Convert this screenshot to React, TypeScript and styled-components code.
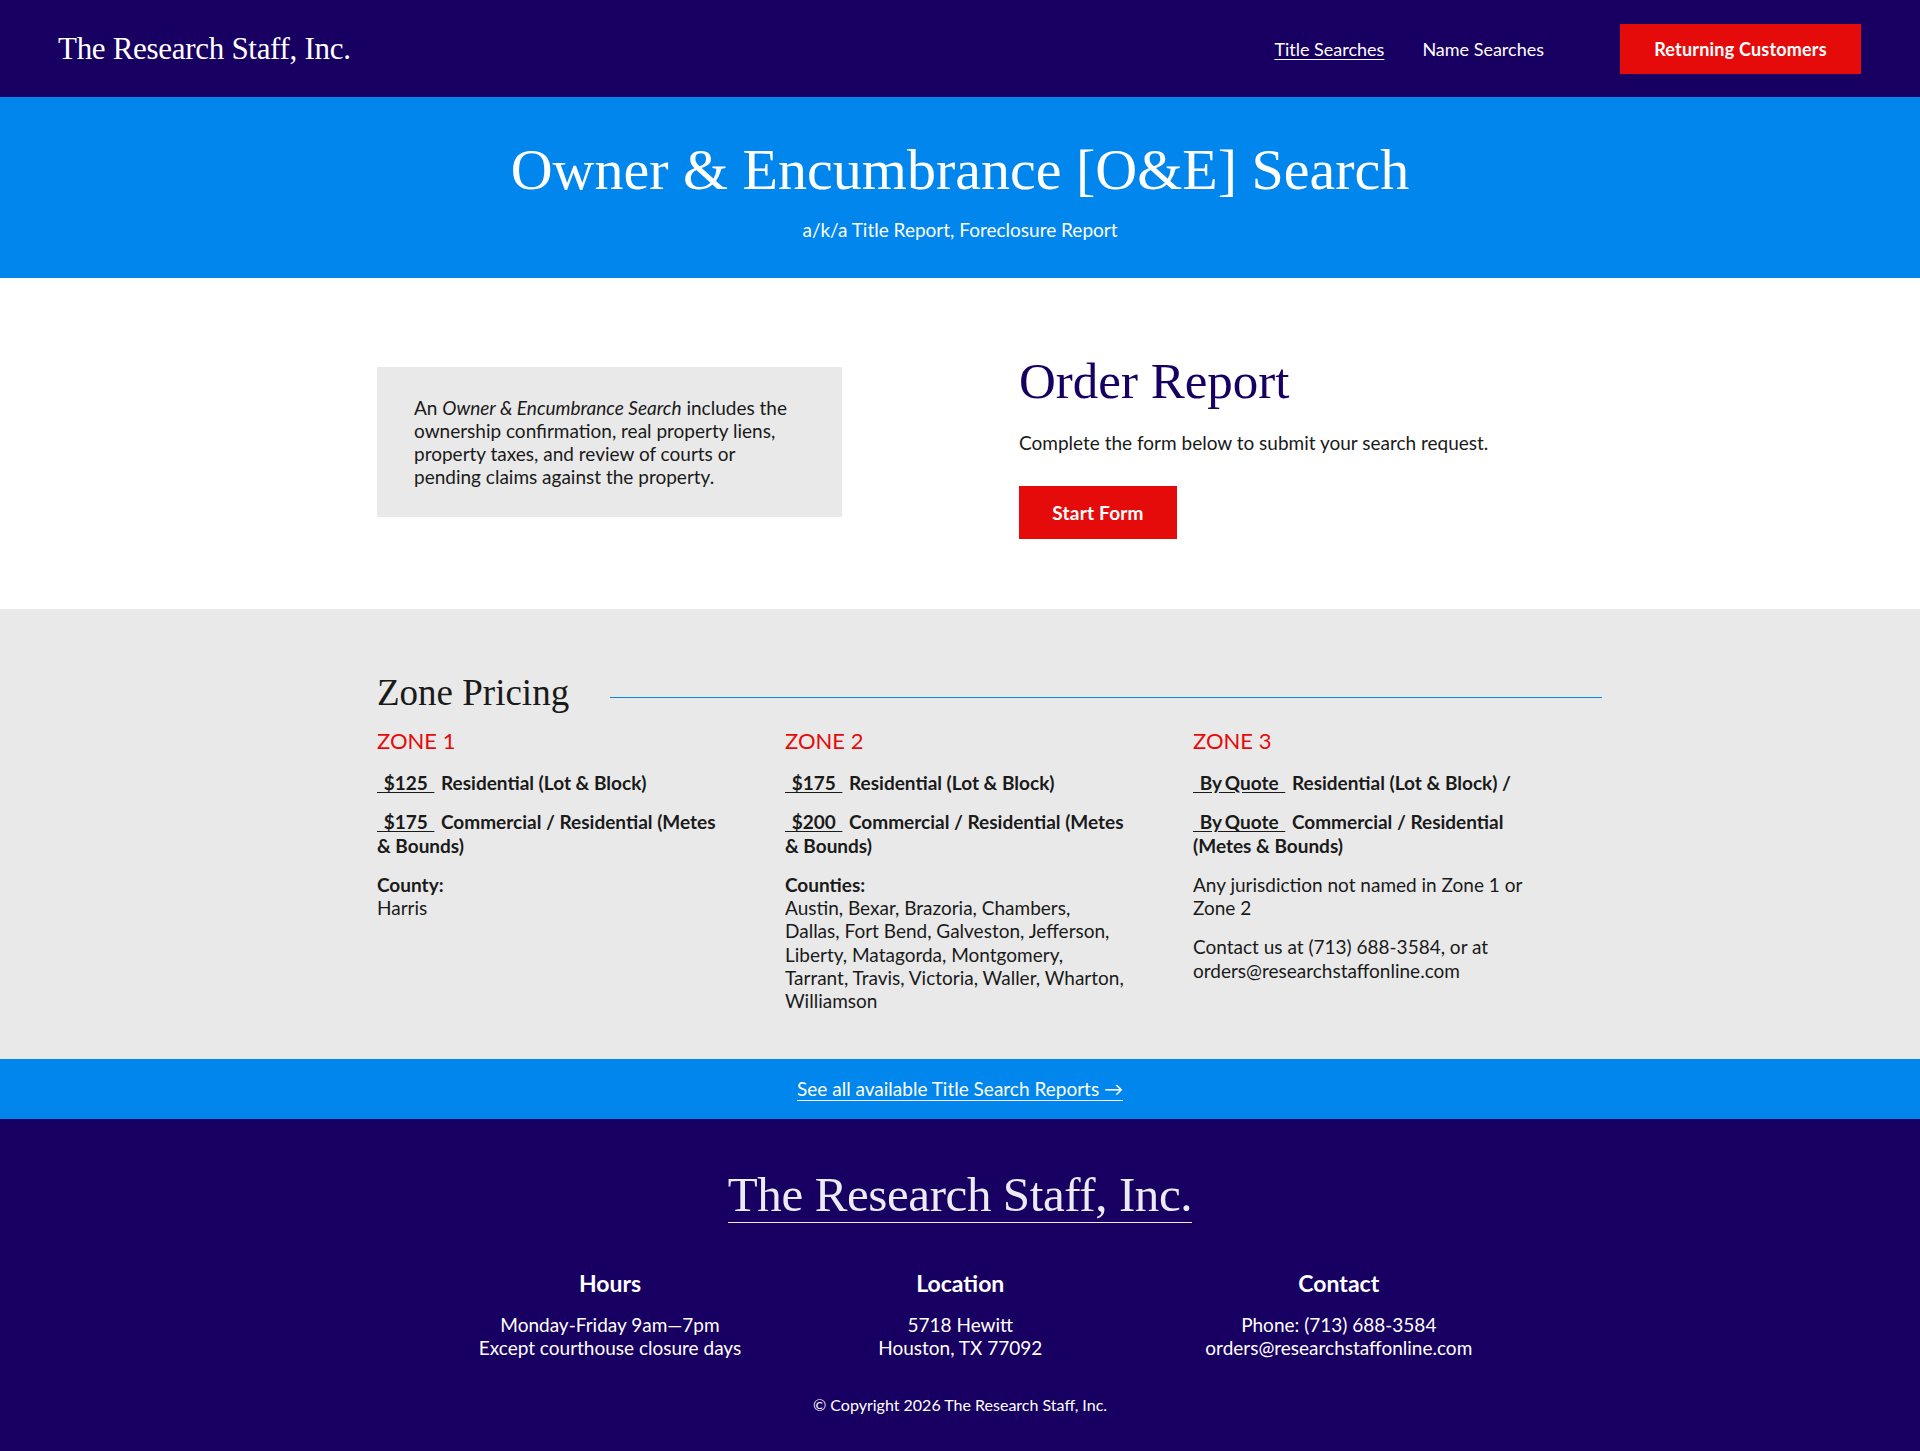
import React from "react";
import styled, { createGlobalStyle } from "styled-components";

const NAVY = "#170061";
const BLUE = "#0086ec";
const RED = "#e50b0b";
const GRAY = "#e9e9e9";
const SERIF = `"Liberation Serif", "DejaVu Serif", serif`;
const SANS = `Lato, "Open Sans", sans-serif`;

const GlobalStyle = createGlobalStyle`
  * { box-sizing: border-box; }
  body {
    margin: 0;
    font-family: ${SANS};
    color: #1a1a1a;
    background: ${NAVY};
  }
  p { margin: 0; }
`;

const Header = styled.header`
  height: 97px;
  background: ${NAVY};
  display: flex;
  align-items: center;
  padding: 0 59px 0 58px;
`;

const Logo = styled.a`
  font-family: ${SERIF};
  font-size: 31px;
  color: #fff;
  text-decoration: none;
  letter-spacing: -0.3px;
`;

const Nav = styled.nav`
  margin-left: auto;
  display: flex;
  align-items: center;
`;

const NavLinks = styled.div`
  display: flex;
  gap: 38px;
  margin-right: 76px;
`;

const NavLink = styled.a<{ $active?: boolean }>`
  font-size: 18px;
  color: #fff;
  text-decoration: ${(p) => (p.$active ? "underline" : "none")};
  text-underline-offset: 3px;
`;

const RedButton = styled.a<{ $w: number; $h: number; $size: number }>`
  display: inline-flex;
  align-items: center;
  justify-content: center;
  width: ${(p) => p.$w}px;
  height: ${(p) => p.$h}px;
  background: ${RED};
  color: #fff;
  font-weight: 700;
  font-size: ${(p) => p.$size}px;
  letter-spacing: 0.2px;
  text-decoration: none;
`;

const Hero = styled.section`
  background: ${BLUE};
  color: #fff;
  text-align: center;
  padding: 37px 0 36px;
`;

const HeroTitle = styled.h1`
  margin: 0;
  font-family: ${SERIF};
  font-weight: 400;
  font-size: 58px;
  line-height: 72px;
`;

const HeroSub = styled.p`
  margin-top: 11px;
  font-size: 19px;
  line-height: 25px;
`;

const Container = styled.div`
  width: 1166px;
  margin: 0 auto;
`;

const Intro = styled.section`
  background: #fff;
  padding: 74px 0 70px;
`;

const IntroGrid = styled(Container)`
  display: grid;
  grid-template-columns: 465px 1fr;
  column-gap: 177px;
  align-items: center;
`;

const InfoBox = styled.div`
  background: ${GRAY};
  padding: 29px 37px 29px;
  margin-bottom: 7px;
  font-size: 19px;
  line-height: 23px;
`;

const OrderTitle = styled.h2`
  margin: 0;
  font-family: ${SERIF};
  font-weight: 400;
  font-size: 51px;
  line-height: 58px;
  color: ${NAVY};
`;

const OrderText = styled.p`
  margin: 21px 0 32px;
  font-size: 19px;
  line-height: 23px;
`;

const Pricing = styled.section`
  background: ${GRAY};
  padding: 62px 0 46px;
`;

const PricingHead = styled.div`
  display: flex;
  align-items: center;
  gap: 41px;
  margin-right: -59px;
`;

const PricingTitle = styled.h2`
  margin: 0;
  font-family: ${SERIF};
  font-weight: 400;
  font-size: 37px;
  line-height: 43px;
  color: #1a1a1a;
  white-space: nowrap;
`;

const Rule = styled.div`
  flex: 1;
  height: 1px;
  background: ${BLUE};
  margin-top: 9px;
`;

const Zones = styled.div`
  display: grid;
  grid-template-columns: repeat(3, 350px);
  column-gap: 58px;
  margin-top: 12px;
`;

const Zone = styled.div`
  display: flex;
  flex-direction: column;
  gap: 16px;
  font-size: 19px;
  line-height: 23.3px;
`;

const ZoneName = styled.h3`
  margin: 0;
  font-weight: 400;
  font-size: 22px;
  line-height: 29px;
  color: ${RED};
`;

const PriceRow = styled.p`
  font-weight: 700;
`;

const Price = styled.span`
  text-decoration: underline;
  text-underline-offset: 2px;
  word-spacing: -1.3px;
`;

const Gap = styled.span`
  word-spacing: -1.3px;
`;

const Label = styled.strong`
  display: block;
  font-weight: 700;
`;

const LinkBar = styled.div`
  background: ${BLUE};
  padding: 18px 0;
  text-align: center;
`;

const BarLink = styled.a`
  color: #fff;
  font-size: 19px;
  line-height: 24px;
  text-decoration: underline;
  text-underline-offset: 4px;
`;

const Footer = styled.footer`
  background: ${NAVY};
  color: #fff;
  text-align: center;
  padding: 50px 0 38px;
`;

const FooterLogo = styled.a`
  display: inline-block;
  font-family: ${SERIF};
  font-size: 49px;
  line-height: 52px;
  color: #ecebf3;
  text-decoration: none;
  padding-bottom: 1px;
  border-bottom: 1px solid #ecebf3;
  letter-spacing: -0.4px;
`;

const FooterCols = styled.div`
  display: flex;
  justify-content: center;
  gap: 137px;
  padding-left: 31px;
  margin-top: 47px;
`;

const FooterCol = styled.div`
  font-size: 19px;
  line-height: 23px;
  &:last-child {
    margin-left: 26px;
  }
`;

const FooterHead = styled.h4`
  margin: 0 0 16px;
  font-size: 23px;
  line-height: 27px;
  font-weight: 700;
`;

const Copyright = styled.p`
  margin-top: 36px;
  font-size: 16px;
  line-height: 20px;
`;

const zones = [
  {
    name: "ZONE 1",
    prices: [
      ["$125", "Residential (Lot & Block)"],
      ["$175", "Commercial / Residential (Metes & Bounds)"],
    ],
    label: "County:",
    lines: ["Harris"],
  },
  {
    name: "ZONE 2",
    prices: [
      ["$175", "Residential (Lot & Block)"],
      ["$200", "Commercial / Residential (Metes & Bounds)"],
    ],
    label: "Counties:",
    lines: [
      "Austin, Bexar, Brazoria, Chambers,",
      "Dallas, Fort Bend, Galveston, Jefferson,",
      "Liberty, Matagorda, Montgomery,",
      "Tarrant, Travis, Victoria, Waller, Wharton,",
      "Williamson",
    ],
  },
];

// price tags are padded with underlined non-breaking spaces
const pad = (s: string) => `\u00a0\u00a0${s}\u00a0\u00a0`;

export default function App() {
  return (
    <>
      <GlobalStyle />
      <Header>
        <Logo href="#">The Research Staff, Inc.</Logo>
        <Nav>
          <NavLinks>
            <NavLink href="#" $active>
              Title Searches
            </NavLink>
            <NavLink href="#">Name Searches</NavLink>
          </NavLinks>
          <RedButton href="#" $w={241} $h={50} $size={18}>
            Returning Customers
          </RedButton>
        </Nav>
      </Header>

      <Hero>
        <HeroTitle>Owner &amp; Encumbrance [O&amp;E] Search</HeroTitle>
        <HeroSub>a/k/a Title Report, Foreclosure Report</HeroSub>
      </Hero>

      <Intro>
        <IntroGrid>
          <InfoBox>
            An <em>Owner &amp; Encumbrance Search</em> includes the ownership
            confirmation, real property liens, property taxes, and review of
            courts or pending claims against the property.
          </InfoBox>
          <div>
            <OrderTitle>Order Report</OrderTitle>
            <OrderText>
              Complete the form below to submit your search request.
            </OrderText>
            <RedButton href="#" $w={158} $h={53} $size={19}>
              Start Form
            </RedButton>
          </div>
        </IntroGrid>
      </Intro>

      <Pricing>
        <Container>
          <PricingHead>
            <PricingTitle>Zone Pricing</PricingTitle>
            <Rule />
          </PricingHead>
          <Zones>
            {zones.map((z) => (
              <Zone key={z.name}>
                <ZoneName>{z.name}</ZoneName>
                {z.prices.map(([price, desc]) => (
                  <PriceRow key={price + desc}>
                    <Price>{pad(price)}</Price>
                    <Gap>{"\u00a0 "}</Gap>
                    {desc}
                  </PriceRow>
                ))}
                <p>
                  <Label>{z.label}</Label>
                  {z.lines.map((line, i) => (
                    <React.Fragment key={line}>
                      {i > 0 && <br />}
                      {line}
                    </React.Fragment>
                  ))}
                </p>
              </Zone>
            ))}
            <Zone>
              <ZoneName>ZONE 3</ZoneName>
              <PriceRow>
                <Price>{pad("By Quote")}</Price>
                <Gap>{"\u00a0 "}</Gap>Residential (Lot &amp; Block) /
              </PriceRow>
              <PriceRow>
                <Price>{pad("By Quote")}</Price>
                <Gap>{"\u00a0 "}</Gap>Commercial / Residential (Metes &amp;
                Bounds)
              </PriceRow>
              <p>Any jurisdiction not named in Zone 1 or Zone 2</p>
              <p>
                Contact us at (713) 688-3584, or at
                orders@researchstaffonline.com
              </p>
            </Zone>
          </Zones>
        </Container>
      </Pricing>

      <LinkBar>
        <BarLink href="#">See all available Title Search Reports →</BarLink>
      </LinkBar>

      <Footer>
        <FooterLogo href="#">The Research Staff, Inc.</FooterLogo>
        <FooterCols>
          <FooterCol>
            <FooterHead>Hours</FooterHead>
            Monday-Friday 9am—7pm
            <br />
            Except courthouse closure days
          </FooterCol>
          <FooterCol>
            <FooterHead>Location</FooterHead>
            5718 Hewitt
            <br />
            Houston, TX 77092
          </FooterCol>
          <FooterCol>
            <FooterHead>Contact</FooterHead>
            Phone: (713) 688-3584
            <br />
            orders@researchstaffonline.com
          </FooterCol>
        </FooterCols>
        <Copyright>© Copyright 2026 The Research Staff, Inc.</Copyright>
      </Footer>
    </>
  );
}
